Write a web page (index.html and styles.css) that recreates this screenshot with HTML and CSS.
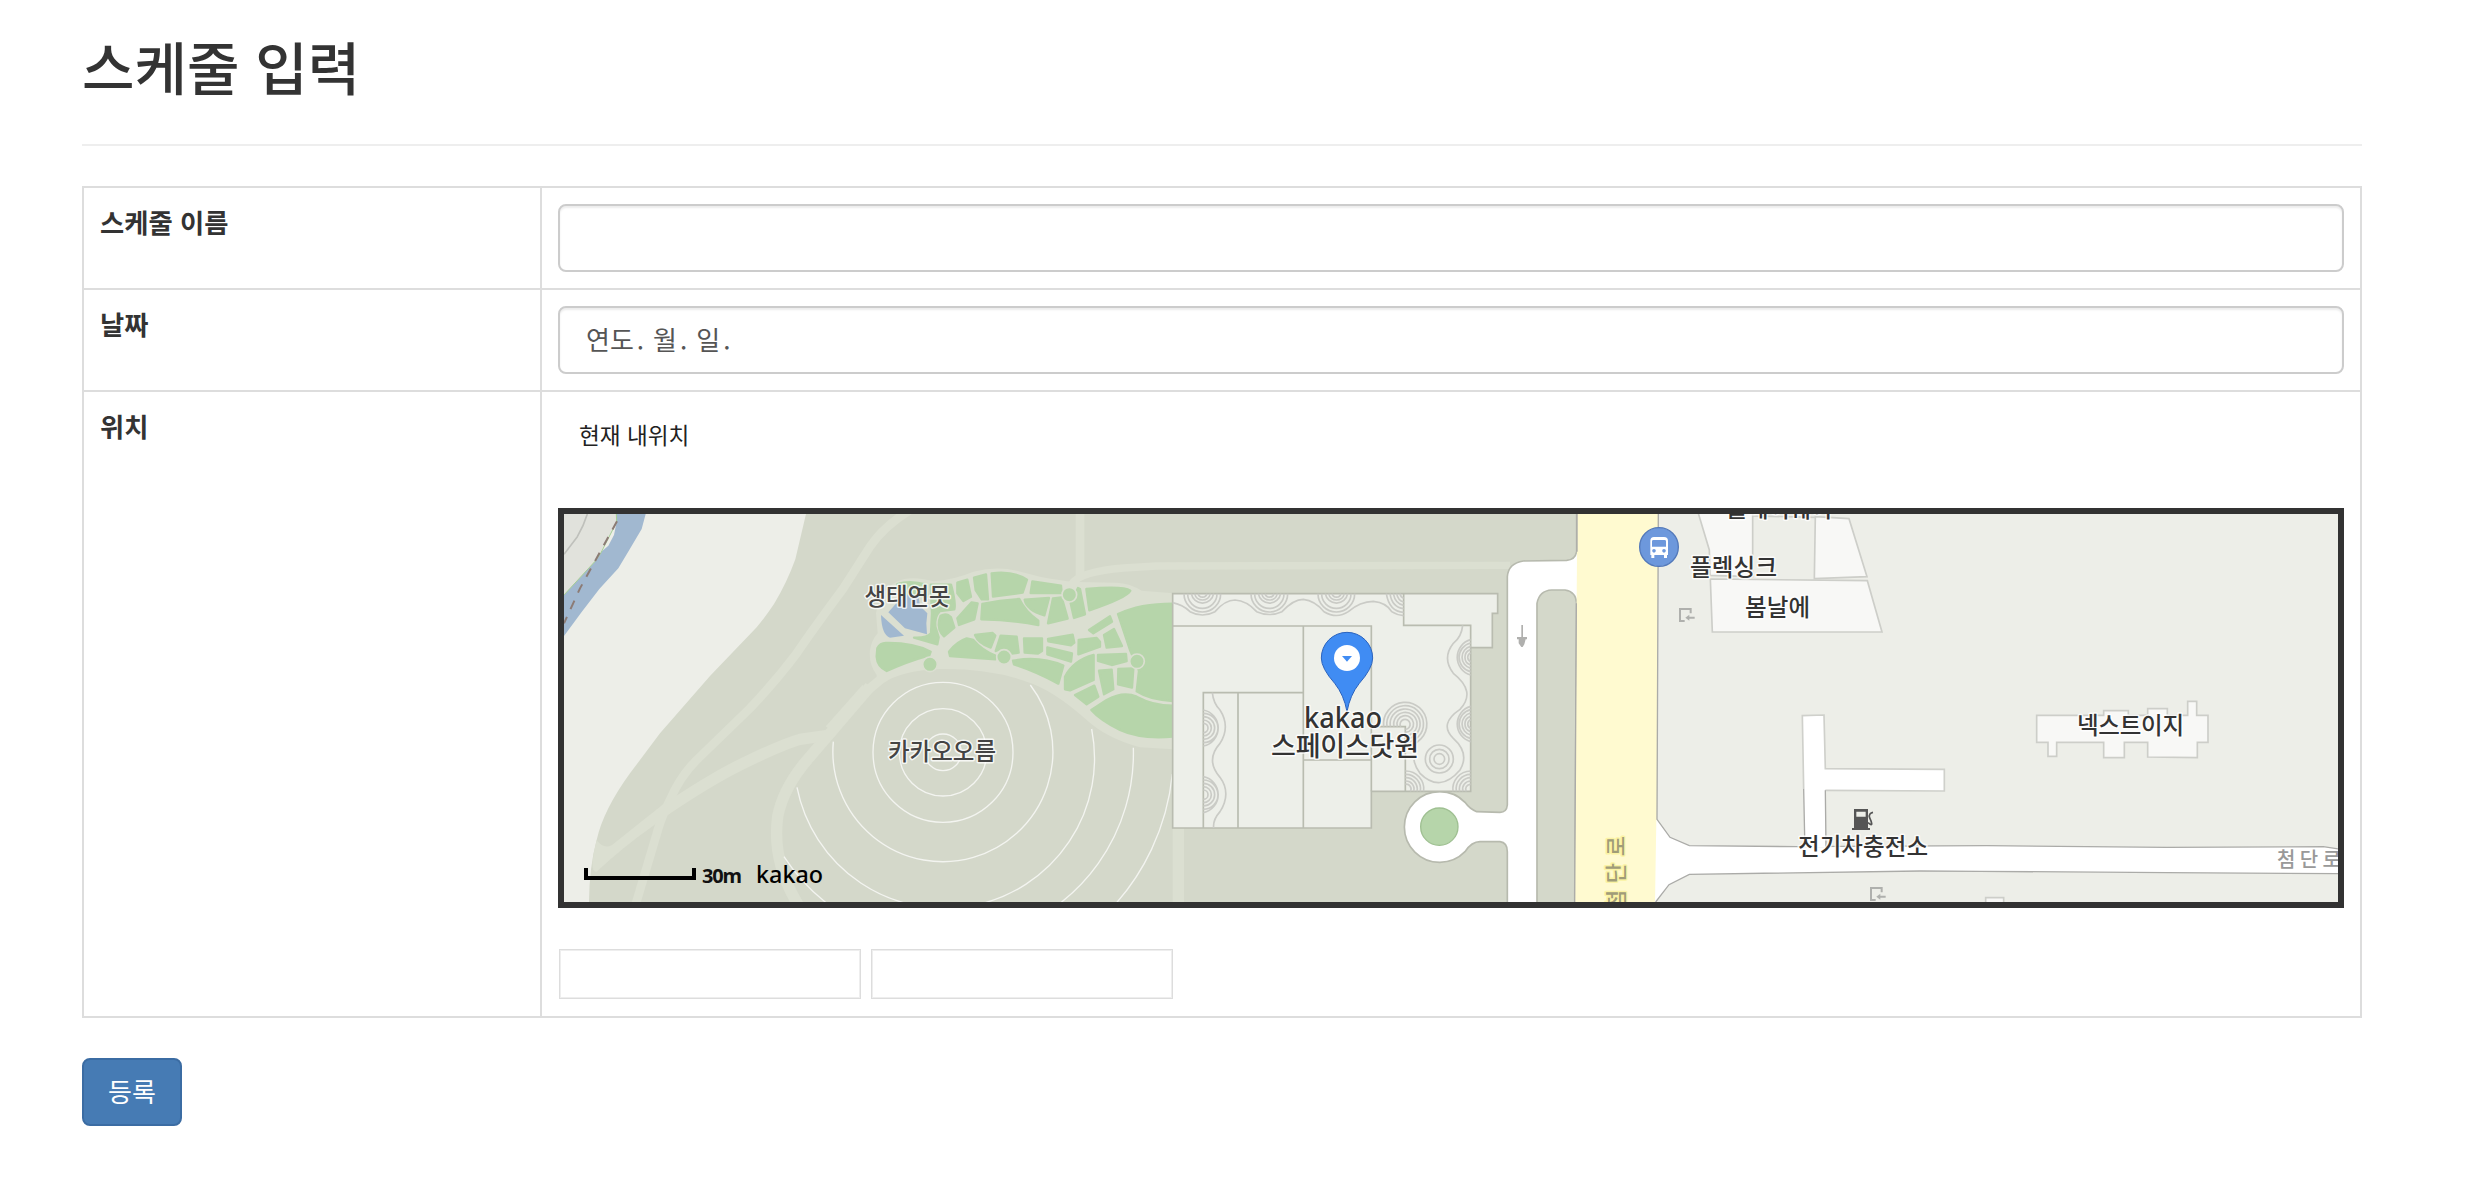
FILE: index.html
```html
<!DOCTYPE html>
<html lang="ko">
<head>
<meta charset="utf-8">
<title>스케줄 입력</title>
<link rel="stylesheet" href="styles.css">
</head>
<body>
<main class="container">
  <h2 class="title">스케줄 입력</h2>
  <hr class="rule">
  <form>
    <table class="table">
      <tr>
        <th>스케줄 이름</th>
        <td><div class="control"></div></td>
      </tr>
      <tr>
        <th>날짜</th>
        <td><div class="control date"><span>연도</span><i>.</i><span>월</span><i>.</i><span>일</span><i>.</i></div></td>
      </tr>
      <tr>
        <th>위치</th>
        <td>
          <div class="here">현재 내위치</div>
          <div class="map">
            <svg class="map-canvas" viewBox="564 514 1774 388">
              <rect class="ground" x="564" y="514" width="1774" height="388"/>

              <!-- river and western field -->
              <g transform="translate(550 500) scale(.33333)">
                <path class="land" d="M42 42H768L736 178Q710 250 672 312Q645 352 620 382Q560 445 480 528L330 700L240 820Q160 930 140 1020Q118 1100 117 1206H42Z"/>
                <path class="water" d="M42 42H287L275 87L236 153L205 205L148 267L95 336L42 408Z"/>
                <path class="yard" d="M42 42H199L200 66L152 160L137 182L42 285Z"/>
                <path class="land" d="M200 66L192 105L175 137L152 157Z"/>
                <path class="bank" d="M199 42L200 66L152 160L137 182L42 285"/>
                <path class="lane" d="M112 42Q102 75 82 110L42 163"/>
                <path class="dash" d="M201 64L90 265L42 370"/>
                <g class="trail">
                  <path stroke-width="26" d="M1080 30Q1000 80 960 140L880 265Q780 400 740 460Q680 540 600 625L440 780Q390 830 360 900Q335 950 325 985L258 1210"/>
                  <path stroke-width="34" d="M345 930Q480 840 560 800Q690 735 750 718L840 705"/>
                  <path stroke-width="34" d="M960 560L840 700L780 770Q700 860 683 950Q665 1085 745 1215"/>
                </g>
                <path class="trail-fill" d="M140 1020Q160 1048 185 1036L345 908L360 940L310 977Q220 1040 140 1115Q115 1120 140 1020Z"/>
              </g>

              <!-- garden -->
              <g transform="translate(840 500) scale(.33333)">
                <g class="trail">
                  <path stroke-width="26" d="M720 36V235"/>
                  <path stroke-width="22" d="M695 252Q720 215 850 204L950 198L2010 196"/>
                  <path stroke-width="34" d="M80 566L-30 690"/>
                  <path stroke-width="34" d="M1015 985V1210"/>
                </g>
                <path class="trail-fill" d="M110 525Q85 490 90 450Q95 420 113 400L108 340Q120 270 170 245Q210 225 280 244Q340 240 400 215Q470 198 530 212L600 230Q680 245 710 246L830 248Q870 250 905 272L1000 280V748L900 742Q800 715 740 660Q640 570 560 545Q450 505 300 507Q180 512 130 550L70 600L50 580L110 530Z"/>
                <g class="lawn">
                  <path d="M834 342Q900 311 998 311V603Q930 600 890 574L897 512L870 450Z"/>
                  <path d="M754 630L800 600Q850 572 890 590Q940 617 998 617V710Q900 718 840 690Q780 660 754 630Z"/>
                  <path d="M112 445Q120 428 140 429Q220 428 272 455L268 466Q200 485 140 513Q112 500 110 470Z"/>
                  <path d="M352 248L382 239L393 290L370 303L352 280Z"/>
                  <path d="M402 233L438 223L444 298L425 298L407 270Z"/>
                  <path d="M455 220Q520 212 561 239L548 278L459 290Z"/>
                  <path d="M577 244L663 257L665 279L572 279Z"/>
                  <path d="M739 267Q850 257 871 272Q860 293 748 331Z"/>
                  <path d="M697 300L714 264L720 267L735 343L702 354L692 310Z"/>
                  <path d="M352 355L395 307L413 310L403 358L357 375Z"/>
                  <path d="M427 312Q480 300 538 297Q555 334 595 362V375Q520 360 424 358Z"/>
                  <path d="M554 299L627 294L613 346Q560 330 554 299Z"/>
                  <path d="M639 295L665 292L683 356L624 370Z"/>
                  <path d="M302 347Q320 337 333 352L343 383L312 409Q292 390 297 362Z"/>
                  <path d="M172 252Q210 240 260 254L262 290H180Z"/>
                  <path d="M272 254L333 254Q348 310 343 328L300 333Q283 350 286 380L296 412L292 433L222 413Q260 415 273 400L276 340Z"/>
                  <path d="M327 455Q350 425 380 415L400 420Q425 450 466 467V478Q400 473 330 468Z"/>
                  <path d="M405 405L458 399L466 407L452 443Q415 430 405 405Z"/>
                  <path d="M482 407L530 410L536 458L515 461Q492 440 467 453Z"/>
                  <path d="M552 415H606V453L593 461L554 458Z"/>
                  <path d="M624 417L698 404L703 428L693 436L625 424Z"/>
                  <path d="M622 442L696 460L693 485L622 463Z"/>
                  <path d="M716 420L770 414L780 425V440L715 463Z"/>
                  <path d="M747 390L810 349L816 365L760 400Z"/>
                  <path d="M792 405L822 387L846 438L800 443Z"/>
                  <path d="M774 465L858 462L860 483L815 495L774 483Z"/>
                  <path d="M519 482Q600 467 670 497L655 551Q590 515 522 493Z"/>
                  <path d="M675 530Q700 482 761 465V540L690 571L675 568Z"/>
                  <path d="M777 512L815 509L820 568L792 583Z"/>
                  <path d="M835 507L880 505L876 563L834 553Z"/>
                  <path d="M705 585L763 557L775 590L740 613Z"/>
                </g>
                <g class="tree">
                  <circle cx="270" cy="493" r="22"/><circle cx="492" cy="471" r="22"/>
                  <circle cx="688" cy="284" r="22"/><circle cx="891" cy="484" r="22"/>
                </g>
                <path class="water" d="M145 337L165 314L200 285H235L240 318L262 340L259 370L261 403L195 385Z"/>
                <path class="water" d="M123 345L192 407L150 413Q125 405 123 345Z"/>
                <g class="contour">
                  <circle cx="309" cy="757" r="55"/><circle cx="309" cy="757" r="131"/><circle cx="309" cy="757" r="210"/>
                  <path d="M571 555A330 330 0 1 1 -20 725"/>
                  <path d="M755 687A450 450 0 1 1 -129 862"/>
                  <path d="M880 743A570 570 0 0 1 -168 1070"/>
                  <path d="M997 822A688 688 0 0 1 800 1240"/>
                </g>
              </g>

              <!-- office block and car park -->
              <g transform="translate(1160 500) scale(.33333)">
                <path class="street" d="M1262 30H1250V155Q1245 180 1220 181L1090 183Q1045 190 1042 230V915Q1040 937 1020 937L950 935Q930 928 915 907A106 106 0 1 0 915 1055Q935 1025 960 1025H1020Q1042 1028 1042 1055V1220H1131V310Q1138 272 1175 270H1215Q1248 275 1250 310L1244 1220H1290V30Z"/>
                <circle class="island" cx="838" cy="980" r="56"/>
                <path class="office" d="M38 281H1013V340H997V443H932V874H634V984H38Z"/>
                <path class="office" d="M38 378H634V874M430 378V984M430 780H634M634 680H736V874M731 281V376H932V443M130 984V578H430M234 578V984"/>
                <g class="garden-rings">
                  <path d="M38 308Q70 315 90 335Q127 355 165 335Q195 300 225 300Q260 302 290 335Q328 352 366 335Q400 298 430 298Q465 302 492 335Q530 358 565 335Q600 304 640 304Q680 308 695 335Q710 345 731 347"/>
                  <path d="M157 578Q160 610 180 630Q212 680 180 730Q135 780 180 832Q215 880 180 935Q158 960 161 984"/>
                  <path d="M908 376Q905 410 880 430Q845 475 880 520Q950 575 900 628Q835 672 880 715Q930 760 900 810Q840 880 780 820Q765 800 762 780"/>
                  <path id="r" d="M72 281A55 55 0 0 0 182 281M83 281A44 44 0 0 0 171 281M94 281A34 34 0 0 0 161 281M104 281A24 24 0 0 0 151 281M114 281A14 14 0 0 0 141 281"/>
                  <use href="#r" x="201"/><use href="#r" x="402"/>
                  <path d="M679 281Q688 335 731 337M690 281Q696 322 731 326M700 281Q706 312 731 316M710 281Q714 302 731 306M720 281Q722 292 731 295"/>
                  <path id="s" d="M130 630A55 55 0 0 1 130 738M130 640A44 44 0 0 1 130 728M130 650A34 34 0 0 1 130 718M130 660A24 24 0 0 1 130 708M130 670A14 14 0 0 1 130 698"/>
                  <use href="#s" y="200"/>
                  <path id="t" d="M932 419A55 55 0 0 0 932 525M932 429A44 44 0 0 0 932 515M932 439A34 34 0 0 0 932 505M932 449A24 24 0 0 0 932 495M932 459A14 14 0 0 0 932 485"/>
                  <use href="#t" y="200"/>
                  <path d="M671 680A65 65 0 1 1 736 737M681 680A55 55 0 1 1 736 727M691 680A45 45 0 1 1 736 717M702 680A35 35 0 1 1 736 707M712 680A25 25 0 1 1 736 697M722 680A15 15 0 1 1 736 688"/>
                  <circle cx="838" cy="777" r="42"/><circle cx="838" cy="777" r="29"/><circle cx="838" cy="777" r="16"/>
                  <path d="M736 813A54 54 0 0 1 791 874M736 823A44 44 0 0 1 781 874M736 833A34 34 0 0 1 771 874M736 843A24 24 0 0 1 761 874M736 853A14 14 0 0 1 751 874"/>
                  <path d="M932 813A54 54 0 0 0 879 874M932 823A44 44 0 0 0 889 874M932 833A34 34 0 0 0 899 874M932 843A24 24 0 0 0 909 874M932 853A14 14 0 0 0 919 874"/>
                </g>
                <path class="oneway" d="M1084 375H1089V411H1101V418H1097L1093 433L1088 441H1084L1076 430V418H1071V411H1084Z"/>
              </g>

              <!-- main road and eastern blocks -->
              <g transform="translate(1480 500) scale(.33333)">
                <path class="avenue" d="M292 30H536L531 958L527 1216H284L290 300Z"/>
                <path class="land" d="M535 30H2590V1220H527L531 958Z"/>
                <path class="kerb" d="M291 30V155M289 310L284 1216"/>
                <path class="road" d="M529 958L570 1012L628 1037L950 1040L1520 1037L2060 1042L2530 1040L2590 1049V1121L2060 1118L1500 1114L1320 1113L628 1123L567 1154L525 1209Z"/>
                <path class="kerb" d="M535 30L531 958L570 1012L628 1037L950 1040L1520 1037L2060 1042L2530 1040L2590 1049M527 1206L567 1154L628 1123L1320 1113L1500 1114L2060 1118L2590 1121"/>
                <path class="road" d="M967 647L1032 645L1036 806L1393 808V873L1036 871V1042H974Z"/>
                <path class="soft" d="M971 866L967 647L1032 645L1036 806L1393 808V873L1036 871"/>
                <path class="kerb" d="M971 866L974 1010M1036 871L1038 1038"/>
                <g class="block">
                  <path d="M652 30L688 150L690 226L818 230V30Z"/>
                  <path d="M1006 50L1107 56L1161 230L1003 236Z"/>
                  <path d="M691 237L1162 242L1206 396H697Z"/>
                  <path d="M1670 646H1871V632H1945V646H2003V626H2062V646H2123V604H2150V646H2184V727H2152V773L2003 771V727H1933V773H1871V727H1730V769H1704V727H1670Z"/>
                  <path d="M1517 1220V1193H1571V1220Z"/>
                </g>
                <path class="soft" d="M818 48L1006 52"/>
                <g id="gate" class="gate"><path d="M632 340V327H600V363H614M644 353H622"/><path class="gate-tip" d="M616 353L628 344V362Z"/></g>
                <use href="#gate" x="573" y="837"/>
                <g class="pump">
                  <path fill-rule="evenodd" d="M1122 927H1164V984H1170V990H1116V984H1122ZM1129 935V950H1157V935Z"/>
                  <path class="hose" d="M1164 968C1182 984 1174 964 1169 954C1165 944 1172 938 1179 937"/>
                </g>
                <circle class="bus-ring" cx="537" cy="141" r="58"/>
                <path class="bus" fill-rule="evenodd" d="M522 111H552Q564 111 564 123V165H561V174H552V165H523V174H514V165H511V123Q511 111 522 111ZM520 120Q516 120 516 124V140H558V124Q558 120 554 120ZM522 147A5 5 0 1 0 522 158A5 5 0 1 0 522 147ZM552 147A5 5 0 1 0 552 158A5 5 0 1 0 552 147Z"/>
              </g>

              <!-- location marker -->
              <g transform="translate(1160 500) scale(.33333)">
                <path class="pin" d="M561 635Q552 585 524 550Q484 505 484 474A77 77 0 0 1 638 474Q638 505 598 550Q570 585 561 635Z"/>
                <circle fill="#fff" cx="561" cy="474" r="39"/>
                <path fill="#408cf3" d="M546 468H576L561 485Z"/>
              </g>

              <!-- labels -->
              <g class="label">
                <text x="864.5" y="605" textLength="86">생태연못</text>
                <text x="888" y="760" textLength="108">카카오오름</text>
                <text class="dark" x="1726" y="516.5" textLength="106">플레이웨어</text>
                <text class="dark" x="1690" y="576" textLength="87">플렉싱크</text>
                <text class="dark" x="1745" y="616" textLength="65">봄날에</text>
                <text class="dark" x="1798" y="855" textLength="130">전기차충전소</text>
                <text class="dark" x="2077" y="734" textLength="107">넥스트이지</text>
                <text class="dark big latin" x="1304" y="728" textLength="78" lengthAdjust="spacingAndGlyphs">kakao</text>
                <text class="dark big" x="1271" y="756" textLength="148">스페이스닷원</text>
                <text class="street-name" x="2277" y="867" textLength="64">첨단로</text>
                <text class="avenue-name" transform="translate(1624 910) rotate(-90)" textLength="74">첨단로</text>
              </g>

              <path class="scale" d="M586 868V878H694V868"/>
              <text class="scale-text" x="702" y="883" textLength="40">30m</text>
              <text class="brand" x="756" y="883" textLength="67" lengthAdjust="spacingAndGlyphs">kakao</text>
            </svg>
          </div>
          <div class="coords"><div class="coord"></div><div class="coord"></div></div>
        </td>
      </tr>
    </table>
    <button class="submit" type="button">등록</button>
  </form>
</main>
</body>
</html>
```
FILE: styles.css
```css
* { box-sizing: border-box; }

body {
  margin: 0;
  background: #fff;
  color: #333;
  font: 26px/40px "Noto Sans CJK KR", sans-serif;
}

.container { width: 2280px; margin: 0 0 0 82px; padding-top: 32px; }

.title {
  height: 66px;
  margin: 0 0 46px;
  font-size: 57px;
  line-height: 66px;
  font-weight: 500;
}

.rule { height: 2px; margin: 0 0 40px; border: 0; background: #eee; }

.table {
  width: 100%;
  margin: 0 0 40px;
  table-layout: fixed;
  border-spacing: 0;
  border: solid #ddd;
  border-width: 2px 0 0 2px;
}

.table th,
.table td {
  padding: 16px;
  border: solid #ddd;
  border-width: 0 2px 2px 0;
  text-align: left;
  vertical-align: top;
}

.table th { width: 458px; padding-top: 14px; font-size: 26.3px; font-weight: 700; }

.control {
  display: flex;
  align-items: center;
  height: 68px;
  padding: 0 26px 2px;
  border: 2px solid #ccc;
  border-radius: 8px;
  box-shadow: inset 0 2px 2px rgba(0, 0, 0, .075);
  color: #555;
}

.date i { margin: 0 9px 0 3px; font-style: normal; }

.here {
  height: 56px;
  margin-bottom: 44px;
  padding-left: 21px;
  color: #222;
  font-size: 22.6px;
  line-height: 53px;
}

.map { height: 400px; border: 6px solid #323232; overflow: hidden; }
.map-canvas { display: block; width: 1774px; height: 388px; }

.coords { display: flex; gap: 10px; margin: 41px 0 1px 1px; }
.coord {
  width: 302px;
  height: 50px;
  border: 1px solid #ddd;
  box-shadow: inset 0 0 0 1px #eee;
}

.submit {
  display: block;
  width: 100px;
  height: 68px;
  padding: 0 0 2px;
  border: 2px solid #3b6ca3;
  border-radius: 8px;
  background: #467bb4;
  color: #fff;
  font: inherit;
}

/* map surfaces */
.ground { fill: #d4d8ca; }
.land { fill: #edeee8; }
.yard { fill: #e1e2dc; }
.water { fill: #a1b8d0; }
.trail { fill: none; stroke: #dbdfd1; }
.trail-fill { fill: #dbdfd1; }
.bank { fill: none; stroke: #a5cf95; stroke-width: 3; }
.lane { fill: none; stroke: #bfc0bb; stroke-width: 5; }
.dash { fill: none; stroke: #8c7b75; stroke-width: 6; stroke-dasharray: 28 26; }
.lawn { fill: #b6d5aa; stroke: #b6d5aa; stroke-width: 7; stroke-linejoin: round; }
.tree { fill: #b6d5aa; stroke: #dbdfd1; stroke-width: 5; }
.contour { fill: none; stroke: #f3f4f0; stroke-width: 4; }
.street { fill: #fff; stroke: #b7baae; stroke-width: 5; }
.island { fill: #b6d5aa; stroke: #9fc092; stroke-width: 4; }
.office { fill: #edefe9; stroke: #b9bcb0; stroke-width: 5; }
.office + .office { fill: none; }
.garden-rings { fill: none; stroke: #cacbc6; stroke-width: 5; }
.oneway { fill: #b0b0ae; }
.avenue { fill: #fffad0; }
.road { fill: #fff; }
.kerb { fill: none; stroke: #ababa8; stroke-width: 4; }
.soft { fill: none; stroke: #cfd0cb; stroke-width: 5; }
.block { fill: #f8f8f6; stroke: #cdcec9; stroke-width: 5; }
.gate { fill: none; stroke: #afb0ad; stroke-width: 6; }
.gate .gate-tip { fill: #afb0ad; stroke: none; }
.pump { fill: #555; }
.hose { fill: none; stroke: #555; stroke-width: 5; }
.bus-ring { fill: #6d98dc; stroke: #5379ba; stroke-width: 4; }
.bus { fill: #fff; }
.pin { fill: #408cf3; stroke: #2a62bd; stroke-width: 3; }

/* map text */
.label text {
  fill: #444;
  stroke: rgba(255, 255, 255, .8);
  stroke-width: 3px;
  stroke-linejoin: round;
  paint-order: stroke;
  font-size: 23.5px;
  font-weight: 500;
}
.label .dark { fill: #333; }
.label .big { font-size: 27px; }
.label .latin { font-family: "Noto Sans", sans-serif; font-size: 28px; }
.label .street-name { fill: #999; font-size: 20px; stroke: none; }
.label .avenue-name { fill: #a09c78; font-size: 22px; stroke: #fbf3a4; }
.scale { fill: none; stroke: #000; stroke-width: 4; }
.scale-text { font: 700 20px "Noto Sans", sans-serif; fill: #111; }
.brand { font: 500 24px "Noto Sans", sans-serif; fill: #000; }
```
